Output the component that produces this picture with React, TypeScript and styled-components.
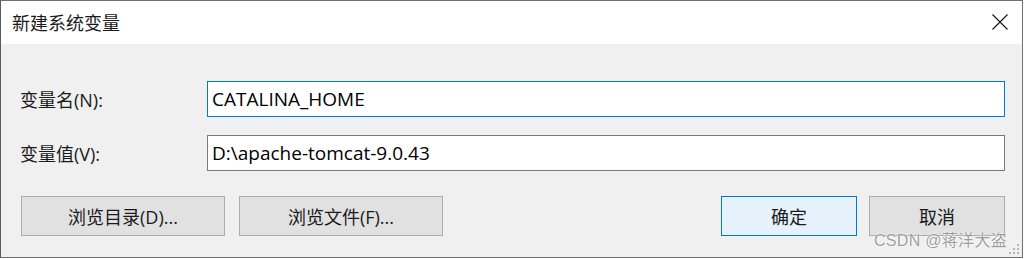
import styled, { createGlobalStyle } from "styled-components";

const GlobalStyle = createGlobalStyle`
  html, body {
    margin: 0;
    padding: 0;
    background: #ffffff;
  }
  body {
    font-family: "Open Sans", "Noto Sans CJK SC", sans-serif;
  }
`;

const font = `"Open Sans", "Noto Sans CJK SC", sans-serif`;

const Window = styled.div`
  width: 1021px;
  height: 256px;
  border: 1px solid #707070;
  border-left-color: #5a5a5a;
  background: #f0f0f0;
  display: flex;
  flex-direction: column;
  position: relative;
`;

const TitleBar = styled.div`
  height: 43px;
  background: #ffffff;
  display: flex;
  align-items: center;
  justify-content: space-between;
  padding: 0 14px 0 11px;
`;

const Title = styled.div`
  font-family: "Noto Sans CJK SC", sans-serif;
  font-size: 18px;
  color: #1a1a1a;
  margin-top: -1px;
`;

const CloseIcon = styled.svg`
  width: 16px;
  height: 16px;
  margin-top: -1px;
`;

const Body = styled.div`
  flex: 1;
  padding: 37px 17px 0 19px;
  display: flex;
  flex-direction: column;
`;

const Row = styled.div<{ $gap?: number }>`
  display: flex;
  align-items: center;
  margin-bottom: ${({ $gap }) => $gap ?? 18}px;
`;

const Label = styled.div`
  width: 187px;
  font-family: ${font};
  font-size: 18px;
  color: #1a1a1a;
`;

const Field = styled.div<{ $focused?: boolean }>`
  flex: 1;
  height: 34px;
  background: #ffffff;
  border: 1px solid ${({ $focused }) => ($focused ? "#0078d7" : "#7a7a7a")};
  display: flex;
  align-items: center;
  padding-left: 4px;
  font-family: ${font};
  font-size: 19px;
  color: #000000;
`;

const ButtonRow = styled.div`
  display: flex;
  align-items: center;
  padding-left: 1px;
`;

const Group = styled.div<{ $gap: number }>`
  display: flex;
  gap: ${({ $gap }) => $gap}px;
`;

const Spacer = styled.div`
  flex: 1;
`;

const Button = styled.div<{ $w: number; $primary?: boolean }>`
  width: ${({ $w }) => $w - 2}px;
  height: 38px;
  border: 1px solid ${({ $primary }) => ($primary ? "#0078d7" : "#adadad")};
  background: ${({ $primary }) => ($primary ? "#e5f1fb" : "#e1e1e1")};
  display: flex;
  align-items: center;
  justify-content: center;
  font-family: ${font};
  font-size: 18px;
  color: #1a1a1a;
`;

const Watermark = styled.div`
  position: absolute;
  right: 15px;
  bottom: 6px;
  font-family: "Liberation Sans", "Noto Sans CJK SC", sans-serif;
  font-size: 16px;
  color: rgba(140, 140, 140, 0.85);
  text-shadow: 0 0 1px #ffffff, 0 0 2px #ffffff;
  letter-spacing: 0.3px;
`;

const Grip = styled.svg`
  position: absolute;
  right: 2px;
  bottom: 2px;
  width: 12px;
  height: 12px;
`;

export default function App() {
  return (
    <>
      <GlobalStyle />
      <Window>
        <TitleBar>
          <Title>新建系统变量</Title>
          <CloseIcon viewBox="0 0 16 16">
            <path d="M0.5 0.5 L15.5 15.5 M15.5 0.5 L0.5 15.5" stroke="#111" strokeWidth="1.1" fill="none" />
          </CloseIcon>
        </TitleBar>
        <Body>
          <Row>
            <Label>变量名(N):</Label>
            <Field $focused>CATALINA_HOME</Field>
          </Row>
          <Row $gap={25}>
            <Label>变量值(V):</Label>
            <Field>D:\apache-tomcat-9.0.43</Field>
          </Row>
          <ButtonRow>
            <Group $gap={14}>
              <Button $w={204}>浏览目录(D)...</Button>
              <Button $w={204}>浏览文件(F)...</Button>
            </Group>
            <Spacer />
            <Group $gap={12}>
              <Button $w={136} $primary>确定</Button>
              <Button $w={136}>取消</Button>
            </Group>
          </ButtonRow>
        </Body>
        <Watermark>CSDN @蒋洋大盗</Watermark>
        <Grip viewBox="0 0 12 12">
          {[
            [9, 1],
            [5, 5],
            [9, 5],
            [1, 9],
            [5, 9],
            [9, 9],
          ].map(([x, y]) => (
            <rect key={`${x}-${y}`} x={x} y={y} width="2" height="2" fill="#b8b8b8" />
          ))}
        </Grip>
      </Window>
    </>
  );
}
